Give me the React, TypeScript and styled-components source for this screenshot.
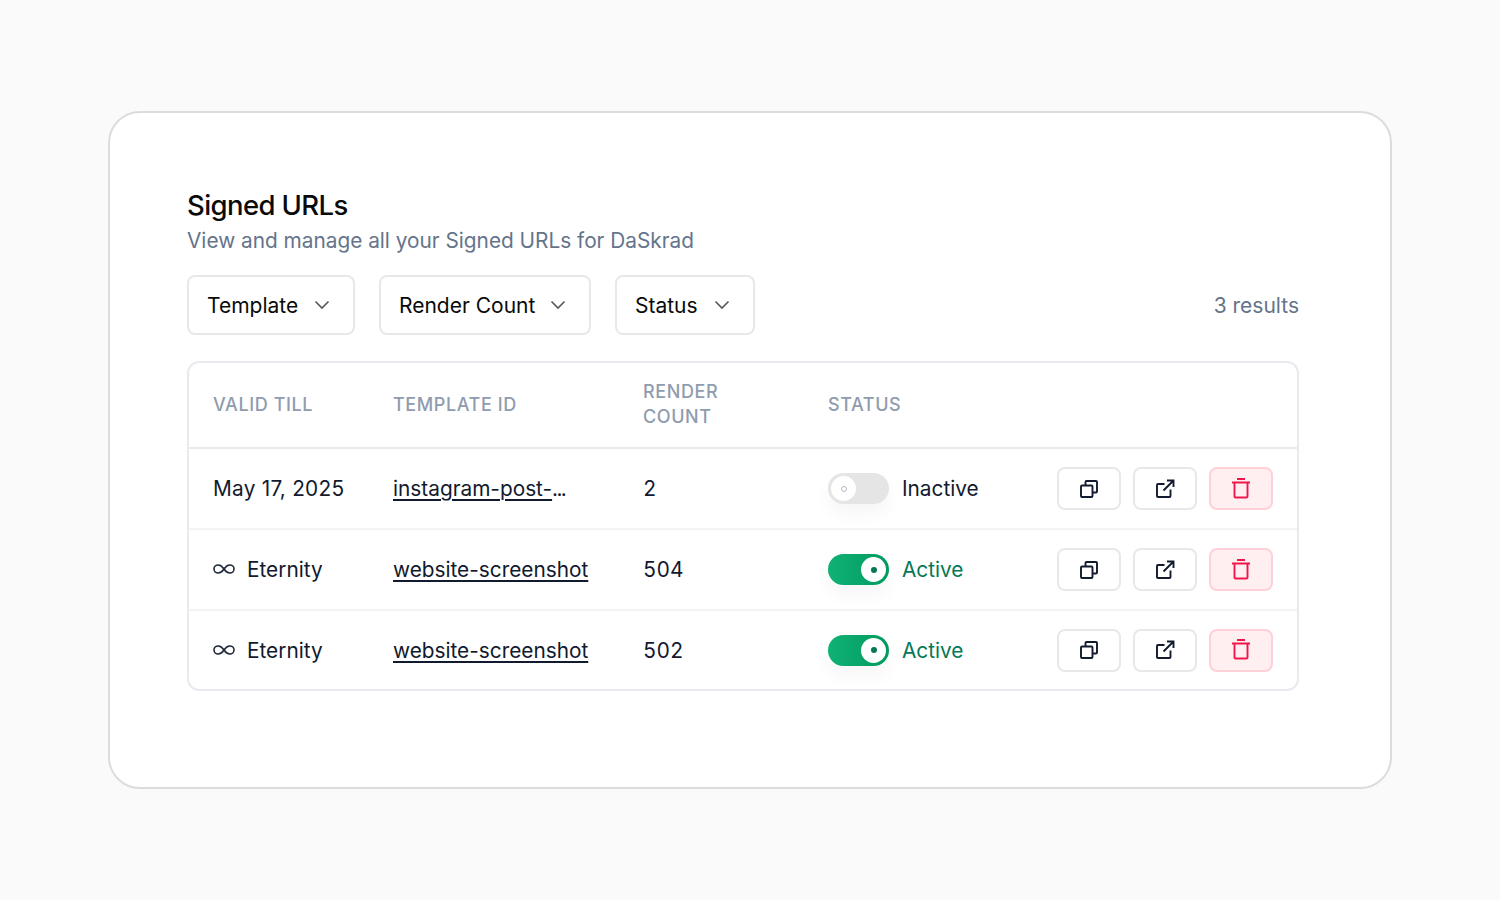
import React from "react";
import styled, { createGlobalStyle } from "styled-components";

const Global = createGlobalStyle`
  html, body { margin: 0; padding: 0; background: #fafafa; }
  body { font-family: Inter, "Liberation Sans", sans-serif; -webkit-font-smoothing: antialiased; }
`;

const Page = styled.div`
  width: 1500px;
  height: 900px;
  box-sizing: border-box;
  padding: 111px 108px;
`;

const Card = styled.section`
  box-sizing: border-box;
  height: 678px;
  background: #fff;
  border: 2px solid #dcdcdc;
  border-radius: 32px;
  padding: 76px 91px 0 77px;
`;

const Title = styled.h1`
  margin: 0;
  font-size: 27.5px;
  line-height: 33px;
  font-weight: 500;
  letter-spacing: -0.6px;
  color: #0a0a0a;
`;

const Subtitle = styled.p`
  margin: 4px 0 0;
  font-size: 20.8px;
  line-height: 30px;
  color: #64748b;
`;

const Toolbar = styled.div`
  display: flex;
  align-items: center;
  gap: 24px;
  margin-top: 19px;
`;

const Select = styled.div<{ $width: number }>`
  box-sizing: border-box;
  width: ${(p) => p.$width}px;
  height: 60px;
  display: flex;
  align-items: center;
  justify-content: space-between;
  padding: 0 22px 0 18px;
  border: 2px solid #e8e8e8;
  border-radius: 8px;
  font-size: 21px;
  color: #0a0a0a;
`;

const Results = styled.span`
  margin-left: auto;
  font-size: 21px;
  color: #64748b;
`;

const TableBox = styled.div`
  margin-top: 26px;
  border: 2px solid #e8eaef;
  border-radius: 12px;
  overflow: hidden;
`;

const Row = styled.div<{ $head?: boolean }>`
  display: grid;
  grid-template-columns: 180px 250px 185px 229px 216px;
  align-items: center;
  padding: ${(p) => (p.$head ? "0 24px 2px" : "0 24px")};
  height: ${(p) => (p.$head ? 82 : 79)}px;
  border-bottom: 2px solid ${(p) => (p.$head ? "#e8eaef" : "#f4f4f6")};
  &:last-child {
    height: 78px;
    border-bottom: none;
  }
`;

const Head = styled.div`
  font-size: 18px;
  line-height: 25px;
  letter-spacing: 0.6px;
  font-weight: 450;
  color: #8f9bae;
  text-transform: uppercase;
`;

const Cell = styled.div`
  display: flex;
  align-items: center;
  font-size: 20.8px;
  color: #111a2e;
`;

const DateText = styled.span`
  letter-spacing: 0.25px;
`;

const CountCell = styled(Cell)`
  font-variant-numeric: tabular-nums;
`;

const InfinityIcon = styled.svg`
  width: 22px;
  height: 12px;
  margin: -1px 12px 0 0;
  fill: none;
  stroke: #1e293b;
  stroke-width: 1.6;
`;

const LinkText = styled.a`
  color: #111a2e;
  text-decoration: underline;
  text-underline-offset: 3px;
  text-decoration-thickness: 1.6px;
`;

const Cut = styled.span`
  letter-spacing: -1.6px;
`;

const Switch = styled.div<{ $on: boolean }>`
  box-sizing: border-box;
  width: 61px;
  height: 31px;
  border-radius: 16px;
  padding: 3px;
  display: flex;
  justify-content: ${(p) => (p.$on ? "flex-end" : "flex-start")};
  background: ${(p) => (p.$on ? "linear-gradient(90deg,#0fb274,#03995f)" : "#e5e5e5")};
  box-shadow: 0 10px 18px rgba(0, 0, 0, 0.04);
`;

const Knob = styled.div<{ $on: boolean }>`
  width: 25px;
  height: 25px;
  border-radius: 50%;
  background: #fff;
  display: flex;
  align-items: center;
  justify-content: center;
  &::after {
    content: "";
    box-sizing: border-box;
    width: 6px;
    height: 6px;
    border-radius: 50%;
    background: ${(p) => (p.$on ? "#047857" : "#fff")};
    border: ${(p) => (p.$on ? "none" : "1.5px solid #b5bac6")};
  }
`;

const StatusLabel = styled.span<{ $on: boolean }>`
  margin-left: 13px;
  color: ${(p) => (p.$on ? "#047857" : "#111a2e")};
`;

const Actions = styled.div`
  display: flex;
  gap: 12px;
`;

const IconButton = styled.button<{ $danger?: boolean }>`
  box-sizing: border-box;
  width: 64px;
  height: 43px;
  padding: 0;
  display: flex;
  align-items: center;
  justify-content: center;
  background: ${(p) => (p.$danger ? "#ffeff1" : "#fff")};
  border: 2px solid ${(p) => (p.$danger ? "#ffd0d7" : "#e8e8e8")};
  border-radius: 8px;
  color: ${(p) => (p.$danger ? "#f0174c" : "#111a2e")};
`;

const Icon = styled.svg`
  width: 24px;
  height: 24px;
  fill: none;
  stroke: currentColor;
  stroke-width: 1.9;
`;

const Chevron = () => (
  <svg width="18" height="18" viewBox="0 0 18 18" fill="none" stroke="#5c5c5c" strokeWidth="1.7">
    <path d="M2.5 5.5 9 12l6.500-6.500" />
  </svg>
);

const CopyIcon = () => (
  <Icon viewBox="0 0 24 24">
    <path d="M8.500 8V5a1 1 0 0 1 1-1H19a1 1 0 0 1 1 1v9.500a1 1 0 0 1-1 1h-3.500" />
    <rect x="4" y="8.500" width="11.500" height="11.500" rx="1" />
  </Icon>
);

const OpenIcon = () => (
  <Icon viewBox="0 0 24 24">
    <path d="M11.500 7H5a1 1 0 0 0-1 1v11a1 1 0 0 0 1 1h11.500a1 1 0 0 0 1-1v-6.500" />
    <path d="M10.500 13.500 20 4M14 3.500h6.500V10" />
  </Icon>
);

const TrashIcon = () => (
  <Icon viewBox="0 0 24 24">
    <path d="M8 2h8M3 5.500h18" />
    <path d="M5.500 5.500V19.500a1 1 0 0 0 1 1h11a1 1 0 0 0 1-1V5.500" />
  </Icon>
);

const rows = [
  { valid: "May 17, 2025", eternal: false, id: "instagram-post-", cut: true, count: "2", on: false },
  { valid: "Eternity", eternal: true, id: "website-screenshot", cut: false, count: "504", on: true },
  { valid: "Eternity", eternal: true, id: "website-screenshot", cut: false, count: "502", on: true },
];

export default function App() {
  return (
    <Page>
      <Global />
      <Card>
        <Title>Signed URLs</Title>
        <Subtitle>View and manage all your Signed URLs for DaSkrad</Subtitle>
        <Toolbar>
          <Select $width={168}>Template<Chevron /></Select>
          <Select $width={212}>Render Count<Chevron /></Select>
          <Select $width={140}>Status<Chevron /></Select>
          <Results>3 results</Results>
        </Toolbar>
        <TableBox>
          <Row $head>
            <Head>Valid till</Head>
            <Head>Template ID</Head>
            <Head>Render<br />count</Head>
            <Head>Status</Head>
            <div />
          </Row>
          {rows.map((r, i) => (
            <Row key={i}>
              <Cell>
                {r.eternal ? (
                  <>
                    <InfinityIcon viewBox="0 0 22 12">
                      <path d="M11 6C9.300 3.500 7.800 2 5.300 2 2.800 2 1 3.800 1 6s1.800 4 4.300 4c2.500 0 4-1.500 5.700-4 1.700-2.500 3.200-4 5.700-4 2.500 0 4.300 1.800 4.300 4s-1.800 4-4.300 4c-2.500 0-4-1.500-5.700-4Z" />
                    </InfinityIcon>
                    {r.valid}
                  </>
                ) : (
                  <DateText>{r.valid}</DateText>
                )}
              </Cell>
              <Cell>
                <span>
                  <LinkText>{r.id}</LinkText>
                  {r.cut && <Cut>...</Cut>}
                </span>
              </Cell>
              <CountCell>{r.count}</CountCell>
              <Cell>
                <Switch $on={r.on}><Knob $on={r.on} /></Switch>
                <StatusLabel $on={r.on}>{r.on ? "Active" : "Inactive"}</StatusLabel>
              </Cell>
              <Actions>
                <IconButton><CopyIcon /></IconButton>
                <IconButton><OpenIcon /></IconButton>
                <IconButton $danger><TrashIcon /></IconButton>
              </Actions>
            </Row>
          ))}
        </TableBox>
      </Card>
    </Page>
  );
}
